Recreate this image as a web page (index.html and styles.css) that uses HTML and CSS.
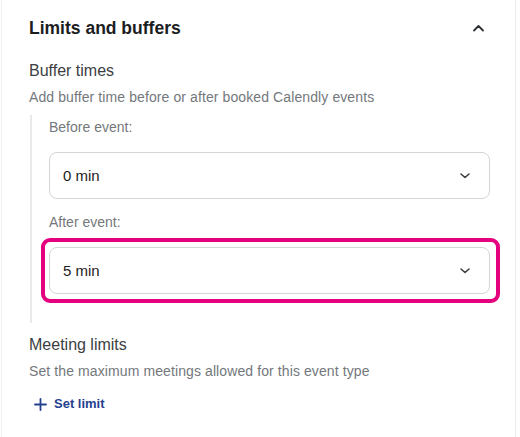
FILE: index.html
```html
<!DOCTYPE html>
<html>
<head>
    <title>Limits and buffers</title>
    <link rel="stylesheet" href="styles.css">
</head>
<body>
    <div class="panel">
        <div class="panel-header">
            <h2 class="panel-title">Limits and buffers</h2>
            <svg class="chevron-up" width="13" height="8" viewBox="0 0 13 8">
                <path d="M2 6.5 L6.5 2 L11 6.5" fill="none" stroke="#2b2f33" stroke-width="1.8" stroke-linecap="round" stroke-linejoin="round"/>
            </svg>
        </div>

        <div class="section-title">Buffer times</div>
        <div class="section-desc">Add buffer time before or after booked Calendly events</div>

        <div class="buffer-group">
            <div class="field-label">Before event:</div>
            <div class="select">
                <span>0 min</span>
                <svg width="12" height="8" viewBox="0 0 12 8">
                    <path d="M2 2 L6 5.5 L10 2" fill="none" stroke="#3a3d40" stroke-width="1.6" stroke-linecap="round" stroke-linejoin="round"/>
                </svg>
            </div>

            <div class="field-label">After event:</div>
            <div class="select-wrap">
                <div class="select">
                    <span>5 min</span>
                    <svg width="12" height="8" viewBox="0 0 12 8">
                        <path d="M2 2 L6 5.5 L10 2" fill="none" stroke="#3a3d40" stroke-width="1.6" stroke-linecap="round" stroke-linejoin="round"/>
                    </svg>
                </div>
                <div class="highlight"></div>
            </div>
        </div>

        <div class="section-title limits-title">Meeting limits</div>
        <div class="section-desc">Set the maximum meetings allowed for this event type</div>

        <div class="add-limit">
            <svg width="13" height="13" viewBox="0 0 13 13">
                <path d="M6.5 1 V12 M1 6.5 H12" fill="none" stroke="#26418f" stroke-width="1.8" stroke-linecap="round"/>
            </svg>
            <span>Set limit</span>
        </div>
    </div>
</body>
</html>
```

FILE: styles.css
```css
body {
    margin: 0;
    background-color: #fff;
    font-family: "Liberation Sans", Arial, sans-serif;
}

.panel {
    margin-left: 1px;
    width: 515px;
    height: 437px;
    box-sizing: border-box;
    border-left: 1px solid #f0f0f0;
    border-right: 1px solid #ececec;
    padding: 16px 25px 0 27px;
}

.panel-header {
    display: flex;
    align-items: center;
    justify-content: space-between;
    height: 24px;
}

.panel-title {
    margin: 0;
    font-size: 17.5px;
    line-height: 24px;
    font-weight: bold;
    color: #1c1d1f;
}

.chevron-up {
    margin-right: 5px;
}

.section-title {
    margin-top: 21px;
    font-size: 16px;
    line-height: 20px;
    color: #3b3e42;
}

.section-desc {
    margin-top: 7px;
    font-size: 14px;
    letter-spacing: 0.1px;
    line-height: 18px;
    color: #74787c;
}

.buffer-group {
    margin: 9px 0 0 1px;
    padding: 3px 0 29px 17px;
    border-left: 2px solid #e9e9e9;
}

.field-label {
    font-size: 14px;
    line-height: 18px;
    color: #74787c;
    margin-bottom: 16px;
}

.select {
    display: flex;
    align-items: center;
    justify-content: space-between;
    height: 47px;
    box-sizing: border-box;
    padding: 0 18px 0 13px;
    border: 1px solid #d3d5d7;
    border-radius: 8px;
    font-size: 15px;
    color: #1f2124;
    margin-bottom: 14px;
}

.select-wrap {
    position: relative;
}

.select-wrap .select {
    margin-bottom: 0;
}

/* pink annotation drawn over the second dropdown */
.highlight {
    position: absolute;
    top: -9px;
    bottom: -9px;
    left: -8px;
    right: -10px;
    border: 4px solid #e5007e;
    border-radius: 9px;
}

.limits-title {
    margin-top: 12px;
}

.add-limit {
    display: flex;
    align-items: center;
    gap: 7px;
    margin-top: 15px;
    padding-left: 5px;
    font-size: 13px;
    line-height: 18px;
    font-weight: bold;
    color: #26418f;
}
```
